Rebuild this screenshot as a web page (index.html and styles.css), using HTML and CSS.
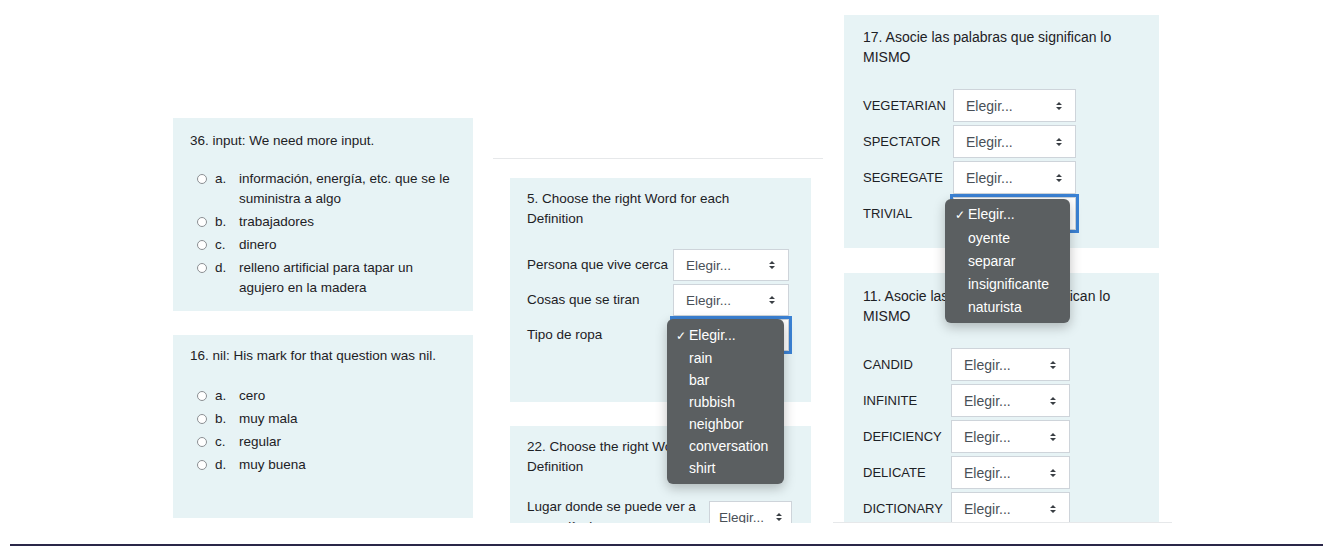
FILE: index.html
```html
<!DOCTYPE html>
<html lang="es">

<head>
    <meta charset="UTF-8">
    <meta name="viewport" content="width=device-width, initial-scale=1.0">
    <title>Cuestionario</title>
    <link rel="stylesheet" href="styles.css">
</head>

<body>
    <div class="sheet">
        <!-- opcion multiple -->
        <div class="col col-left">
            <div class="que que-multi">
                <div class="qtext">36. input: We need more input.</div>
                <div class="answer">
                    <div class="opt"><span class="radio"></span><span class="letter">a.</span><span class="opt-text">información, energía, etc. que se le suministra a algo</span></div>
                    <div class="opt"><span class="radio"></span><span class="letter">b.</span><span class="opt-text">trabajadores</span></div>
                    <div class="opt"><span class="radio"></span><span class="letter">c.</span><span class="opt-text">dinero</span></div>
                    <div class="opt"><span class="radio"></span><span class="letter">d.</span><span class="opt-text">relleno artificial para tapar un agujero en la madera</span></div>
                </div>
            </div>
            <div class="que que-multi que-short">
                <div class="qtext">16. nil: His mark for that question was nil.</div>
                <div class="answer">
                    <div class="opt"><span class="radio"></span><span class="letter">a.</span><span class="opt-text">cero</span></div>
                    <div class="opt"><span class="radio"></span><span class="letter">b.</span><span class="opt-text">muy mala</span></div>
                    <div class="opt"><span class="radio"></span><span class="letter">c.</span><span class="opt-text">regular</span></div>
                    <div class="opt"><span class="radio"></span><span class="letter">d.</span><span class="opt-text">muy buena</span></div>
                </div>
            </div>
        </div>

        <!-- emparejamiento -->
        <div class="col col-mid">
            <div class="que que-match que-tall">
                <div class="qtext">5. Choose the right Word for each<br>Definition</div>
                <div class="match">
                    <span class="match-label">Persona que vive cerca</span>
                    <div class="pick"><span>Elegir...</span><svg class="arrows" width="8" height="10" viewBox="0 0 8 10"><path d="M1 4 4 1 7 4ZM1 6 4 9 7 6Z" /></svg></div>
                    <span class="match-label">Cosas que se tiran</span>
                    <div class="pick"><span>Elegir...</span><svg class="arrows" width="8" height="10" viewBox="0 0 8 10"><path d="M1 4 4 1 7 4ZM1 6 4 9 7 6Z" /></svg></div>
                    <span class="match-label">Tipo de ropa</span>
                    <div class="pick pick-focus"><span>Elegir...</span><svg class="arrows" width="8" height="10" viewBox="0 0 8 10"><path d="M1 4 4 1 7 4ZM1 6 4 9 7 6Z" /></svg>
                        <ul class="menu">
                            <li class="menu-item"><span class="tick">✓</span>Elegir...</li>
                            <li class="menu-item">rain</li>
                            <li class="menu-item">bar</li>
                            <li class="menu-item">rubbish</li>
                            <li class="menu-item">neighbor</li>
                            <li class="menu-item">conversation</li>
                            <li class="menu-item">shirt</li>
                        </ul>
                    </div>
                </div>
            </div>
            <div class="que que-match">
                <div class="qtext">22. Choose the right Word for each<br>Definition</div>
                <div class="match match-wide">
                    <span class="match-label">Lugar donde se puede ver a una película</span>
                    <div class="pick pick-narrow"><span>Elegir...</span><svg class="arrows" width="8" height="10" viewBox="0 0 8 10"><path d="M1 4 4 1 7 4ZM1 6 4 9 7 6Z" /></svg></div>
                </div>
            </div>
        </div>

        <div class="col col-right">
            <div class="que que-match que-words">
                <div class="qtext">17. Asocie las palabras que significan lo<br>MISMO</div>
                <div class="match">
                    <span class="match-label">VEGETARIAN</span>
                    <div class="pick"><span>Elegir...</span><svg class="arrows" width="8" height="10" viewBox="0 0 8 10"><path d="M1 4 4 1 7 4ZM1 6 4 9 7 6Z" /></svg></div>
                    <span class="match-label">SPECTATOR</span>
                    <div class="pick"><span>Elegir...</span><svg class="arrows" width="8" height="10" viewBox="0 0 8 10"><path d="M1 4 4 1 7 4ZM1 6 4 9 7 6Z" /></svg></div>
                    <span class="match-label">SEGREGATE</span>
                    <div class="pick"><span>Elegir...</span><svg class="arrows" width="8" height="10" viewBox="0 0 8 10"><path d="M1 4 4 1 7 4ZM1 6 4 9 7 6Z" /></svg></div>
                    <span class="match-label">TRIVIAL</span>
                    <div class="pick pick-focus"><span>Elegir...</span><svg class="arrows" width="8" height="10" viewBox="0 0 8 10"><path d="M1 4 4 1 7 4ZM1 6 4 9 7 6Z" /></svg>
                        <ul class="menu menu-r">
                            <li class="menu-item"><span class="tick">✓</span>Elegir...</li>
                            <li class="menu-item">oyente</li>
                            <li class="menu-item">separar</li>
                            <li class="menu-item">insignificante</li>
                            <li class="menu-item">naturista</li>
                        </ul>
                    </div>
                </div>
            </div>
            <div class="que que-match que-words que-words2">
                <div class="qtext">11. Asocie las palabras que significan lo<br>MISMO</div>
                <div class="match">
                    <span class="match-label">CANDID</span>
                    <div class="pick"><span>Elegir...</span><svg class="arrows" width="8" height="10" viewBox="0 0 8 10"><path d="M1 4 4 1 7 4ZM1 6 4 9 7 6Z" /></svg></div>
                    <span class="match-label">INFINITE</span>
                    <div class="pick"><span>Elegir...</span><svg class="arrows" width="8" height="10" viewBox="0 0 8 10"><path d="M1 4 4 1 7 4ZM1 6 4 9 7 6Z" /></svg></div>
                    <span class="match-label">DEFICIENCY</span>
                    <div class="pick"><span>Elegir...</span><svg class="arrows" width="8" height="10" viewBox="0 0 8 10"><path d="M1 4 4 1 7 4ZM1 6 4 9 7 6Z" /></svg></div>
                    <span class="match-label">DELICATE</span>
                    <div class="pick"><span>Elegir...</span><svg class="arrows" width="8" height="10" viewBox="0 0 8 10"><path d="M1 4 4 1 7 4ZM1 6 4 9 7 6Z" /></svg></div>
                    <span class="match-label">DICTIONARY</span>
                    <div class="pick"><span>Elegir...</span><svg class="arrows" width="8" height="10" viewBox="0 0 8 10"><path d="M1 4 4 1 7 4ZM1 6 4 9 7 6Z" /></svg></div>
                </div>
            </div>
        </div>
    </div>
    <div class="rule"></div>
</body>

</html>
```

FILE: styles.css
```css
* {
    margin: 0;
    padding: 0;
    box-sizing: border-box;
}

body {
    font-family: "Liberation Sans", Arial, sans-serif;
    font-size: 13.5px;
    color: #1d2125;
    background-color: #fff;
}

.sheet {
    display: flex;
    align-items: flex-start;
    height: 523px;
    padding-left: 173px;
}

.col {
    display: flex;
    flex-direction: column;
}

.col-left {
    width: 300px;
    padding-top: 118px;
    gap: 24px;
}

.col-mid {
    width: 330px;
    height: 365px;
    margin-left: 20px;
    margin-top: 158px;
    padding: 19px 12px 0 17px;
    border-top: 1px solid #e6e8ea;
    overflow: hidden;
    gap: 24px;
}

.col-right {
    width: 339px;
    height: 523px;
    margin-left: 10px;
    padding: 15px 13px 0 11px;
    border-bottom: 1px solid #e6e8ea;
    overflow: hidden;
    gap: 25px;
    font-size: 14px;
}

/* caja de pregunta */
.que {
    flex-shrink: 0;
    background-color: #e7f3f5;
    padding: 13px 17px;
}

.qtext {
    line-height: 20px;
}

.answer {
    display: flex;
    flex-direction: column;
    gap: 3px;
    margin-top: 18px;
}

.que-short {
    padding-top: 11px;
    min-height: 183px;
}

.que-short .answer {
    margin-top: 20px;
}

.opt {
    display: flex;
    align-items: flex-start;
    line-height: 20px;
}

.radio {
    flex-shrink: 0;
    width: 10px;
    height: 10px;
    margin: 5px 8px 0 7px;
    border: 1px solid #8b8f93;
    border-radius: 50%;
    background-color: #fff;
}

.letter {
    flex-shrink: 0;
    width: 24px;
}

.opt-text {
    flex: 1;
}

/* emparejamiento */
.que-match {
    padding: 11px 17px;
}

.que-tall {
    min-height: 224px;
}

.match {
    display: grid;
    grid-template-columns: 146px 116px;
    row-gap: 3px;
    align-items: center;
    margin-top: 20px;
}

.match-wide {
    grid-template-columns: 182px 83px;
}

.match-label {
    line-height: 20px;
}

.pick {
    position: relative;
    height: 32px;
    display: flex;
    align-items: center;
    justify-content: space-between;
    padding: 0 12px 0 12px;
    border: 1px solid #ced4da;
    background-color: #fff;
    color: #495057;
}

.pick-narrow {
    padding-left: 9px;
    padding-right: 8px;
}

.arrows {
    fill: #3a3f44;
}

.pick-focus {
    outline: 3px solid #3b82d4;
}

.que-words {
    padding: 12px 19px 18px;
}

.que-words .match {
    grid-template-columns: 90px 123px;
    margin-top: 22px;
}

.que-words .match-label {
    font-size: 13px;
}

.que-words .pick {
    height: 33px;
}

.que-words2 {
    padding-top: 13px;
}

.que-words2 .match {
    grid-template-columns: 88px 119px;
}

/* lista desplegada */
.menu {
    position: absolute;
    left: -7px;
    top: -1px;
    z-index: 5;
    width: 117px;
    padding: 5px 0;
    list-style: none;
    background-color: #5b5f61;
    border-radius: 6px;
    box-shadow: 0 4px 12px rgba(0, 0, 0, 0.25);
    color: #fff;
    font-size: 14px;
    line-height: 22px;
}

.menu-r {
    left: -9px;
    top: 1px;
    width: 125px;
    padding: 4px 0;
    line-height: 23px;
}

.menu-item {
    padding-left: 22px;
    white-space: nowrap;
}

.menu-r .menu-item {
    padding-left: 23px;
}

.tick {
    display: inline-block;
    width: 13px;
    margin-left: -13px;
    font-size: 12px;
}

.rule {
    height: 2px;
    margin: 21px 10px 0;
    background-color: #2a2748;
}
```
